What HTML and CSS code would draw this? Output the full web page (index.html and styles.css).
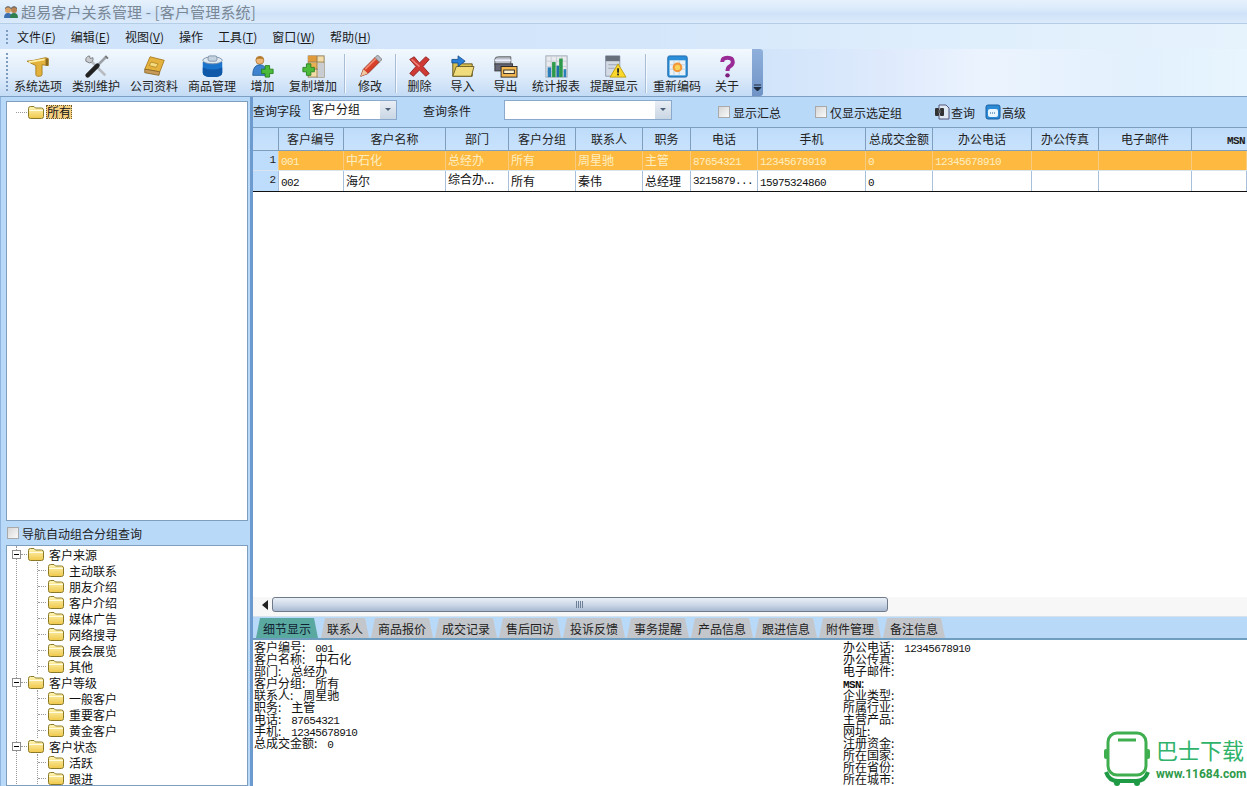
FILE: index.html
```html
<!DOCTYPE html>
<html lang="zh-CN">
<head>
<meta charset="utf-8">
<title>超易客户关系管理</title>
<link rel="stylesheet" href="styles.css">
</head>
<body>
<svg class="defs" width="0" height="0" aria-hidden="true">
  <defs>
    <linearGradient id="fg" x1="0" y1="0" x2="0" y2="1"><stop offset="0" stop-color="#fff6b8"/><stop offset="1" stop-color="#f0c84a"/></linearGradient>
    <symbol id="folder" viewBox="0 0 18 16">
      <path d="M1.5 4.5 Q1.5 2.5 3.5 2.5 H7 L8.5 4 H14.5 Q16.5 4 16.5 6 V12.5 Q16.5 14.5 14.5 14.5 H3.5 Q1.5 14.5 1.5 12.5 Z" fill="url(#fg)" stroke="#8a7a28"/>
      <path d="M2 6.5 H16" stroke="#fffbe0" stroke-width="1"/>
    </symbol>
  </defs>
</svg>
<div class="app">
  <header class="titlebar">
    <svg class="title-icon" width="16" height="14" viewBox="0 0 16 14"><circle cx="5" cy="5" r="3" fill="#d9a066"/><path d="M1 13 Q1 8 5 8 Q9 8 9 13Z" fill="#3c6fb0"/><circle cx="11" cy="5" r="3" fill="#b98250"/><path d="M7 13 Q7 8 11 8 Q15 8 15 13Z" fill="#2f7f4f"/><path d="M2 3.500 Q5 0 8 3.500 M8 3.500 Q11 0 14 3.500" fill="none" stroke="#444"/></svg>
    <span class="title-text">超易客户关系管理 - [客户管理系统]</span>
  </header>

  <nav class="menubar">
    <span class="grip menu-grip"></span>
    <span class="menu-item">文件(<u>F</u>)</span>
    <span class="menu-item">编辑(<u>E</u>)</span>
    <span class="menu-item">视图(<u>V</u>)</span>
    <span class="menu-item">操作</span>
    <span class="menu-item">工具(<u>T</u>)</span>
    <span class="menu-item">窗口(<u>W</u>)</span>
    <span class="menu-item">帮助(<u>H</u>)</span>
  </nav>

  <div class="toolrow">
    <div class="toolbar">
      <span class="grip tool-grip"></span>
      <div class="tool"><svg viewBox="0 0 28 26"><path d="M1 7 L9 6 L22 3 L25 4 V12 L18 11 L18 22 Q18 24 15 24 H13 Q11 24 11 22 V12 Z" fill="#e2b23c" stroke="#a87c1c"/><path d="M3 8 L21 5" stroke="#fff0a8" stroke-width="2"/><path d="M22 4 H25 V12 H22Z" fill="#8a6a20"/></svg><span>系统选项</span></div>
      <div class="tool"><svg viewBox="0 0 28 26"><path d="M5 4 L24 23" stroke="#b8bcc0" stroke-width="3"/><path d="M2 7 Q1 2 6 1 L7 4 L10 3 Q11 8 6 9 Z" fill="#c8ccd0" stroke="#777"/><path d="M25 2 L15 12" stroke="#9aa0a6" stroke-width="3"/><path d="M15 12 L4 23" stroke="#222" stroke-width="5" stroke-linecap="round"/><path d="M24 1 L27 4" stroke="#777" stroke-width="2"/></svg><span>类别维护</span></div>
      <div class="tool"><svg viewBox="0 0 28 26"><path d="M9 2 L25 6 L20 19 L3 16 Z" fill="#e6b23e" stroke="#a87a1e"/><path d="M3 16 L20 19 L19 23 L3 20 Z" fill="#c89a5a" stroke="#8a6a2a"/><path d="M10 8 L18 10 L16 14 L8 12Z" fill="#f6dc80" stroke="#b78a28"/></svg><span>公司资料</span></div>
      <div class="tool"><svg viewBox="0 0 28 26"><path d="M3 8 V20 Q3 25 14 25 Q25 25 25 20 V8 Z" fill="#1a74cc"/><path d="M3 14 Q14 19 25 14 V20 Q25 25 14 25 Q3 25 3 20Z" fill="#0f57a8"/><ellipse cx="14" cy="6" rx="11" ry="4" fill="#dfe9f2" stroke="#7b8ea4"/><rect x="9" y="1" width="10" height="6" rx="2" fill="#c4d2df" stroke="#7b8ea4"/></svg><span>商品管理</span></div>
      <div class="tool small"><svg viewBox="0 0 28 26"><circle cx="11" cy="6" r="4.500" fill="#eeb678" stroke="#b07a3a"/><path d="M6 5 Q11 -1 16 5 Q11 3 6 5Z" fill="#a8701c"/><path d="M3 23 Q3 11 11 11 Q19 11 19 23Z" fill="#3f83d0" stroke="#23609c"/><path d="M17 12 h5 v4 h4 v5 h-4 v4 h-5 v-4 h-4 v-5 h4Z" fill="#4dbb3a" stroke="#25801f"/></svg><span>增加</span></div>
      <div class="tool"><svg viewBox="0 0 28 26"><rect x="8" y="1" width="18" height="24" fill="#f4dca8" stroke="#8a7a5a"/><rect x="8" y="1" width="10" height="7" fill="#e09a3a"/><rect x="8" y="9" width="10" height="7" fill="#e8b052"/><path d="M18 1 V25 M8 8 H26 M8 16 H26" stroke="#8a7a5a"/><rect x="19" y="9" width="7" height="16" fill="#c9ccd0"/><path d="M6 10 h5 v4 h4 v5 h-4 v4 h-5 v-4 h-4 v-5 h4Z" fill="#4dbb3a" stroke="#25801f"/></svg><span>复制增加</span></div>
      <span class="sep"></span>
      <div class="tool mid"><svg viewBox="0 0 28 26"><path d="M3 24 L6 16 L19 3 L24 8 L11 21 Z" fill="#d8402a" stroke="#8e2416"/><path d="M6 16 L11 21 L3 24Z" fill="#f0c8a0"/><path d="M19 3 L22 0 L27 5 L24 8Z" fill="#b8bcc4" stroke="#777"/><path d="M8 16 L20 4" stroke="#f08a70" stroke-width="2"/></svg><span>修改</span></div>
      <span class="sep"></span>
      <div class="tool small"><svg viewBox="0 0 28 26"><path d="M3 5 L8 2 L14 9 L21 2 L25 5 L18 13 L25 21 L21 24 L14 17 L7 24 L3 21 L10 13 Z" fill="#d03a34" stroke="#8a2020"/><path d="M5 5 L14 13" stroke="#ef8a80" stroke-width="1.500"/></svg><span>删除</span></div>
      <div class="tool small"><svg viewBox="0 0 28 26"><path d="M3 8 H12 L14 10 H25 V24 H3Z" fill="#d9c04e" stroke="#5a4e20"/><path d="M3 24 L7 13 H27 L24 24Z" fill="#f0dc7c" stroke="#6a5a20"/><path d="M2 5 H9 V1 L17 7 L9 13 V9 H2Z" fill="#2a7fd8" stroke="#174f90"/></svg><span>导入</span></div>
      <div class="tool small"><svg viewBox="0 0 28 26"><path d="M2 5 Q2 2 6 2 H20 V11 H2Z" fill="#b8bfc8" stroke="#555"/><path d="M2 6 H20" stroke="#eef" stroke-width="2"/><rect x="2" y="10" width="20" height="8" fill="#667" stroke="#333"/><rect x="9" y="13" width="18" height="12" fill="#f3b752" stroke="#222"/><rect x="12" y="17" width="12" height="4" fill="#fff3d0" stroke="#222"/></svg><span>导出</span></div>
      <div class="tool"><svg viewBox="0 0 28 26"><rect x="2" y="1" width="24" height="24" fill="#e8eaee" stroke="#9aa4ae"/><path d="M2 7 H26 M2 13 H26 M2 19 H26 M8 1 V25 M14 1 V25 M20 1 V25" stroke="#c4ccd4"/><rect x="4" y="14" width="4" height="11" fill="#2b7fb8"/><rect x="9" y="8" width="4" height="17" fill="#2c9a4a"/><rect x="14" y="12" width="3" height="13" fill="#1f6fa8"/><rect x="17" y="4" width="4" height="21" fill="#2c9a4a"/><rect x="22" y="16" width="3" height="9" fill="#2b7fb8"/></svg><span>统计报表</span></div>
      <div class="tool"><svg viewBox="0 0 28 26"><path d="M4 1 H20 V24 H4Z" fill="#d4dae4" stroke="#8a96a8"/><path d="M4 1 H20 V7 H4Z" fill="#68707c"/><path d="M7 11 H17 M7 15 H14" stroke="#98a2b2"/><path d="M18 10 L27 25 H9Z" fill="#fcd82c" stroke="#b89a10"/><rect x="17" y="15" width="2" height="5" fill="#222"/><rect x="17" y="21" width="2" height="2" fill="#222"/></svg><span>提醒显示</span></div>
      <span class="sep"></span>
      <div class="tool"><svg viewBox="0 0 28 26"><rect x="3" y="1" width="22" height="24" rx="2" fill="#2a8fd8" stroke="#1a65a8"/><rect x="5" y="6" width="18" height="17" fill="#eaf2f8"/><path d="M5 11 H23 M5 16 H23 M10 6 V23 M16 6 V23" stroke="#bcd0e0"/><circle cx="14" cy="14" r="5.500" fill="#f2983a"/><circle cx="14" cy="14" r="3" fill="#fad25a"/></svg><span>重新编码</span></div>
      <div class="tool last"><svg viewBox="0 0 28 26"><path d="M8 8 Q8 3 14 3 Q20 3 20 8 Q20 11 16.500 13 Q14 14.500 14 18" fill="none" stroke="#9a2a96" stroke-width="4.500"/><circle cx="14" cy="23" r="2.500" fill="#7f1f80"/></svg><span>关于</span></div>
      <div class="tool-more"><svg width="9" height="8" viewBox="0 0 9 8"><path d="M1 1 H8 M1 3.500 H8 L4.500 7Z" fill="#1c2a3c" stroke="#1c2a3c"/></svg></div>
    </div>
  </div>

  <main class="main">
    <aside class="side">
      <div class="treebox tree-top">
        <div class="top-row">
          <span class="hdots"></span>
          <svg class="fld" width="18" height="16"><use href="#folder"/></svg>
          <span class="sel-label">所有</span>
        </div>
      </div>
      <label class="side-check"><span class="check"></span>导航自动组合分组查询</label>
      <div class="treebox tree-bottom">
        <div class="roots">
          <div class="root"><span class="exp"></span><span class="hd"></span><svg class="fld" width="18" height="16"><use href="#folder"/></svg><span class="lbl">客户来源</span></div>
          <div class="kids">
            <div class="kid"><span class="hd2"></span><svg class="fld" width="18" height="16"><use href="#folder"/></svg><span class="lbl">主动联系</span></div>
            <div class="kid"><span class="hd2"></span><svg class="fld" width="18" height="16"><use href="#folder"/></svg><span class="lbl">朋友介绍</span></div>
            <div class="kid"><span class="hd2"></span><svg class="fld" width="18" height="16"><use href="#folder"/></svg><span class="lbl">客户介绍</span></div>
            <div class="kid"><span class="hd2"></span><svg class="fld" width="18" height="16"><use href="#folder"/></svg><span class="lbl">媒体广告</span></div>
            <div class="kid"><span class="hd2"></span><svg class="fld" width="18" height="16"><use href="#folder"/></svg><span class="lbl">网络搜寻</span></div>
            <div class="kid"><span class="hd2"></span><svg class="fld" width="18" height="16"><use href="#folder"/></svg><span class="lbl">展会展览</span></div>
            <div class="kid"><span class="hd2"></span><svg class="fld" width="18" height="16"><use href="#folder"/></svg><span class="lbl">其他</span></div>
          </div>
          <div class="root"><span class="exp"></span><span class="hd"></span><svg class="fld" width="18" height="16"><use href="#folder"/></svg><span class="lbl">客户等级</span></div>
          <div class="kids">
            <div class="kid"><span class="hd2"></span><svg class="fld" width="18" height="16"><use href="#folder"/></svg><span class="lbl">一般客户</span></div>
            <div class="kid"><span class="hd2"></span><svg class="fld" width="18" height="16"><use href="#folder"/></svg><span class="lbl">重要客户</span></div>
            <div class="kid"><span class="hd2"></span><svg class="fld" width="18" height="16"><use href="#folder"/></svg><span class="lbl">黄金客户</span></div>
          </div>
          <div class="root"><span class="exp"></span><span class="hd"></span><svg class="fld" width="18" height="16"><use href="#folder"/></svg><span class="lbl">客户状态</span></div>
          <div class="kids">
            <div class="kid"><span class="hd2"></span><svg class="fld" width="18" height="16"><use href="#folder"/></svg><span class="lbl">活跃</span></div>
            <div class="kid"><span class="hd2"></span><svg class="fld" width="18" height="16"><use href="#folder"/></svg><span class="lbl">跟进</span></div>
          </div>
        </div>
      </div>
    </aside>

    <section class="content">
      <div class="querybar">
        <span class="q-label">查询字段</span>
        <div class="combo combo-field"><span class="combo-text">客户分组</span><span class="combo-btn"></span></div>
        <span class="q-label q-cond">查询条件</span>
        <div class="combo combo-cond"><span class="combo-text"></span><span class="combo-btn"></span></div>
        <label class="q-check q-sum"><span class="check"></span>显示汇总</label>
        <label class="q-check q-only"><span class="check"></span>仅显示选定组</label>
        <span class="q-btn q-search"><svg width="16" height="16" viewBox="0 0 16 16"><path d="M5 1 H12 L15 4 V15 H5Z" fill="#dfeaf4" stroke="#557"/><rect x="1" y="4" width="4" height="8" rx="1" fill="#333"/><rect x="6" y="4" width="4" height="8" rx="1" fill="#333"/><rect x="4" y="6" width="3" height="3" fill="#555"/></svg>查询</span>
        <span class="q-btn q-adv"><svg width="16" height="16" viewBox="0 0 16 16"><rect x="1" y="1" width="14" height="14" rx="2" fill="#2b8ad6" stroke="#1a5fa0"/><rect x="3" y="5" width="10" height="8" rx="2" fill="#eaf6ff"/><path d="M5 9 H11" stroke="#1a5fa0" stroke-dasharray="1 1"/></svg>高级</span>
      </div>

      <div class="grid-wrap">
        <div class="g-row g-head">
          <span class="cell"></span><span class="cell">客户编号</span><span class="cell">客户名称</span><span class="cell">部门</span><span class="cell">客户分组</span><span class="cell">联系人</span><span class="cell">职务</span><span class="cell">电话</span><span class="cell">手机</span><span class="cell">总成交金额</span><span class="cell">办公电话</span><span class="cell">办公传真</span><span class="cell">电子邮件</span><span class="cell"><span class="num msn">MSN</span></span>
        </div>
        <div class="g-row g-sel">
          <span class="cell idx">1</span><span class="cell"><span class="num">001</span></span><span class="cell">中石化</span><span class="cell">总经办</span><span class="cell">所有</span><span class="cell">周星驰</span><span class="cell">主管</span><span class="cell"><span class="num">87654321</span></span><span class="cell"><span class="num">12345678910</span></span><span class="cell"><span class="num">0</span></span><span class="cell"><span class="num">12345678910</span></span><span class="cell"></span><span class="cell"></span><span class="cell"></span>
        </div>
        <div class="g-row g-plain">
          <span class="cell idx">2</span><span class="cell"><span class="num">002</span></span><span class="cell">海尔</span><span class="cell raised">综合办...</span><span class="cell">所有</span><span class="cell">秦伟</span><span class="cell">总经理</span><span class="cell raised"><span class="num">3215879...</span></span><span class="cell"><span class="num">15975324860</span></span><span class="cell"><span class="num">0</span></span><span class="cell"></span><span class="cell"></span><span class="cell"></span><span class="cell"></span>
        </div>
        <div class="grid-fill"></div>
        <div class="hscroll">
          <span class="arrow-left"></span>
          <div class="thumb"><span class="thumb-grip"></span></div>
        </div>
      </div>

      <div class="tabs">
        <span class="tab active">细节显示</span>
        <span class="tab">联系人</span>
        <span class="tab">商品报价</span>
        <span class="tab">成交记录</span>
        <span class="tab">售后回访</span>
        <span class="tab">投诉反馈</span>
        <span class="tab">事务提醒</span>
        <span class="tab">产品信息</span>
        <span class="tab">跟进信息</span>
        <span class="tab">附件管理</span>
        <span class="tab">备注信息</span>
      </div>

      <div class="detail">
        <div class="d-col d-left">
          <div>客户编号:<span class="num val">001</span></div>
          <div>客户名称:<span class="val">中石化</span></div>
          <div>部门:<span class="val">总经办</span></div>
          <div>客户分组:<span class="val">所有</span></div>
          <div>联系人:<span class="val">周星驰</span></div>
          <div>职务:<span class="val">主管</span></div>
          <div>电话:<span class="num val">87654321</span></div>
          <div>手机:<span class="num val">12345678910</span></div>
          <div>总成交金额:<span class="num val">0</span></div>
        </div>
        <div class="d-col">
          <div>办公电话:<span class="num val">12345678910</span></div>
          <div>办公传真:</div>
          <div>电子邮件:</div>
          <div><span class="num msn">MSN</span>:</div>
          <div>企业类型:</div>
          <div>所属行业:</div>
          <div>主营产品:</div>
          <div>网址:</div>
          <div>注册资金:</div>
          <div>所在国家:</div>
          <div>所在省份:</div>
          <div>所在城市:</div>
        </div>
      </div>
    </section>
  </main>

  <div class="watermark">
    <svg class="wm-logo" width="52" height="56" viewBox="0 0 52 56"><rect x="7" y="3" width="38" height="42" rx="9" fill="#fff" stroke="#3fae4f" stroke-width="3"/><path d="M17 10 H35" stroke="#3fae4f" stroke-width="3"/><rect x="3" y="19" width="4" height="10" rx="2" fill="#3fae4f"/><rect x="45" y="19" width="4" height="10" rx="2" fill="#3fae4f"/><path d="M5 42 Q8 51 17 51 H35 Q44 51 47 42" fill="none" stroke="#1f9a45" stroke-width="4"/><circle cx="16" cy="53" r="3" fill="#1f9a45"/><circle cx="36" cy="53" r="3" fill="#1f9a45"/></svg>
    <div class="wm-text">
      <span class="wm-name">巴士下载</span>
      <span class="wm-url">www.11684.com</span>
    </div>
  </div>
</div>
</body>
</html>
```

FILE: styles.css
```css
* { box-sizing: border-box; }
html, body { margin: 0; padding: 0; }
body {
  font-family: "Noto Sans CJK SC", "Liberation Sans", sans-serif;
  font-size: 12px;
  color: #111;
  background: #b9d9f9;
  overflow: hidden;
}
.defs { position: absolute; }
.app {
  position: relative;
  width: 1247px;
  height: 786px;
  display: flex;
  flex-direction: column;
  overflow: hidden;
}
.num {
  font-family: "Liberation Mono", monospace;
  font-size: 11px;
  letter-spacing: -0.6px;
}
.msn { font-weight: 700; }
.val { margin-left: 10px; }

/* title */
.titlebar {
  height: 24px;
  flex: none;
  display: flex;
  align-items: center;
  padding-left: 3px;
  background: linear-gradient(#e6f1fc 0, #dcebfb 35%, #cfe2f8 60%, #dcebfb 100%);
  border-bottom: 1px solid #b4cee8;
}
.title-icon { margin-right: 2px; }
.title-text { font-size: 15px; color: #7a8896; letter-spacing: 0.15px; }

/* menu */
.menubar {
  height: 25px;
  flex: none;
  display: flex;
  align-items: center;
  background: linear-gradient(90deg, #cfe3fa 0, #d3e6fa 50%, #dfeefc 75%, #e6f3fd 100%);
}
.grip {
  width: 2px;
  background: repeating-linear-gradient(#7e9cc0 0 2px, transparent 2px 4px);
}
.menu-grip { height: 14px; margin: 0 1.5px 0 6px; }
.menu-item { padding: 0 7.5px; color: #1a1a1a; }
.menu-item u { text-underline-offset: 1px; }

/* toolbar */
.toolrow {
  height: 47px;
  flex: none;
  background: linear-gradient(90deg, #d0e4fa 760px, #dfeafc 890px, #ebf3fe 980px, #e2f1fd 1150px, #e8f5fe 1247px);
  display: flex;
}
.toolbar {
  width: 763px;
  display: flex;
  align-items: stretch;
  background: linear-gradient(#f2f8fe 0, #dceafa 60%, #c3dbf5 100%);
  border-radius: 0 3px 3px 0;
}
.tool-grip { height: 38px; margin: 4px 0 0 6px; flex: none; }
.tool {
  width: 58px;
  flex: none;
  display: flex;
  flex-direction: column;
  align-items: center;
  padding-top: 6px;
  color: #222;
  line-height: 14px;
}
.tool:nth-child(2) { margin-left: 1px; }
.tool svg { display: block; width: 25px; height: 23px; margin-bottom: 1px; flex: none; }
.tool.small { width: 43px; }
.tool.mid { width: 46px; }
.tool.last { width: 42px; }
.sep {
  width: 1px;
  flex: none;
  margin: 5px 2px 3px 2px;
  background: #a9bdd4;
  box-shadow: 1px 0 0 #f4f9ff;
}
.tool-more {
  width: 11px;
  margin-left: auto;
  flex: none;
  background: linear-gradient(#8fb0dc, #6f93c6);
  display: flex;
  align-items: flex-end;
  justify-content: center;
  padding-bottom: 4px;
  border-radius: 0 3px 3px 0;
}

/* main */
.main {
  flex: 1;
  min-height: 0;
  display: flex;
  border-top: 1px solid #7f9fc2;
  background: #b9d9f9;
}
.side {
  width: 250px;
  flex: none;
  display: flex;
  flex-direction: column;
  padding: 4px 2px 0 5px;
  background: #b9d9f9;
  border-left: 1px solid #8fb4e0;
}
.treebox {
  background: #fff;
  border: 1px solid #7f9dbc;
}
.tree-top { height: 420px; flex: none; padding: 2px 0 0 9px; }
.top-row { display: flex; align-items: center; height: 16px; }
.hdots { width: 11px; border-top: 1px dotted #999; }
.fld { display: block; flex: none; }
.sel-label {
  margin-left: 1px;
  padding: 0 1px;
  line-height: 14px;
  background: #f7d183;
  outline: 1px dotted #6a5a30;
  outline-offset: -1px;
}
.side-check {
  height: 24px;
  flex: none;
  display: flex;
  align-items: center;
  padding-left: 1px;
  color: #222;
}
.check {
  width: 12px;
  height: 12px;
  flex: none;
  margin-right: 3px;
  background: linear-gradient(135deg, #d6d6d6, #fafafa);
  border: 1px solid #a9a9a9;
}
.tree-bottom { flex: 1; min-height: 0; overflow: hidden; }
.roots { margin-left: 9px; border-left: 1px dotted #999; }
.root, .kid { height: 16px; display: flex; align-items: center; }
.exp {
  position: relative;
  width: 9px;
  height: 9px;
  flex: none;
  margin-left: -5px;
  background: #fff;
  border: 1px solid #8d8d8d;
}
.exp::after {
  content: "";
  position: absolute;
  left: 1px;
  right: 1px;
  top: 3px;
  height: 1px;
  background: #000;
}
.hd { width: 6px; flex: none; border-top: 1px dotted #999; }
.root .lbl { margin-left: 4px; }
.kids { margin-left: 20px; border-left: 1px dotted #999; }
.hd2 { width: 8px; flex: none; border-top: 1px dotted #999; }
.kid .fld { margin-left: 1px; }
.kid .lbl { margin-left: 4px; }
.lbl { color: #111; }

/* content */
.content {
  flex: 1;
  min-width: 0;
  display: flex;
  flex-direction: column;
  border-left: 3px solid #6d9bd0;
}
.querybar {
  height: 30px;
  flex: none;
  display: flex;
  align-items: center;
  padding-bottom: 4px;
  background: #b9d9f9;
  color: #222;
}
.q-label { white-space: nowrap; }
.combo {
  height: 20px;
  display: flex;
  background: #fff;
  border: 1px solid #8aa9cc;
}
.combo-text { flex: 1; padding-left: 2px; line-height: 16px; color: #111; }
.combo-btn {
  position: relative;
  width: 16px;
  background: linear-gradient(#e9eef4, #c9d6e4);
}
.combo-btn::after {
  content: "";
  position: absolute;
  left: 5px;
  top: 7px;
  border: 3px solid transparent;
  border-top: 3px solid #4d6078;
}
.combo-field { width: 88px; margin-left: 8px; }
.q-cond { margin-left: 26px; }
.combo-cond { width: 168px; margin-left: 33px; }
.q-check { display: flex; align-items: center; white-space: nowrap; position: relative; top: 2px; }
.q-sum { margin-left: 46px; }
.q-only { margin-left: 34px; }
.q-btn { display: flex; align-items: center; gap: 1px; white-space: nowrap; position: relative; top: 2px; }
.q-search { margin-left: 32px; }
.q-adv { margin-left: 10px; }

/* grid */
.grid-wrap {
  flex: 1;
  min-height: 0;
  display: flex;
  flex-direction: column;
  background: #fff;
  border-top: 1px solid #7f9dbc;
}
.g-row {
  display: grid;
  grid-template-columns: 26px 65px 102px 63px 67px 67px 48px 67px 108px 67px 99px 67px 93px 55px;
  flex: none;
}
.cell {
  display: block;
  padding: 0 2px;
  border-right: 1px solid #a8c0da;
  white-space: nowrap;
  overflow: hidden;
}
.g-head {
  height: 23px;
  line-height: 21px;
  background: linear-gradient(#bedcfb, #c8e2fc);
  border-bottom: 1px solid #7f9dbc;
  color: #222;
}
.g-head .cell { text-align: center; border-right-color: #7f9dbc; }
.g-head .cell:last-child { text-align: right; border-right: 0; }
.g-sel {
  height: 20px;
  line-height: 18px;
  background: #fdb940;
  color: #fdeec0;
  border-bottom: 1px solid #d8e4ee;
}
.g-sel .cell { border-right-color: #f7cc80; }
.g-plain {
  height: 20px;
  line-height: 19px;
  background: #fff;
  color: #111;
}
.idx {
  background: #bedcfb;
  color: #222;
  text-align: right;
  font-family: "Liberation Mono", monospace;
  font-size: 11px;
}
.raised { line-height: 15px; }
.grid-fill {
  flex: 1;
  min-height: 0;
  border-top: 1px solid #111;
  background: #fff;
}
.hscroll {
  height: 20px;
  flex: none;
  display: flex;
  align-items: flex-start;
  padding-left: 6px;
  background: #f7f7f7;
  border-bottom: 1px solid #d5e2ee;
}
.arrow-left {
  width: 0;
  height: 0;
  margin: 3px 4px 0 3px;
  border: 5px solid transparent;
  border-right: 6px solid #222;
  border-left: 0;
}
.thumb {
  width: 616px;
  height: 15px;
  border: 1px solid #6f7a88;
  border-radius: 3px;
  background: linear-gradient(#e9eff6 0, #cdd9e8 50%, #a9b9d2 100%);
  display: flex;
  align-items: center;
  justify-content: center;
}
.thumb-grip {
  width: 8px;
  height: 7px;
  background: repeating-linear-gradient(90deg, #6f7f96 0 1px, transparent 1px 2px);
}

/* tabs */
.tabs {
  height: 23px;
  flex: none;
  display: flex;
  align-items: flex-end;
  gap: 2px;
  padding-left: 3px;
  background: #b9d9f9;
  border-bottom: 2px solid #6f9dbf;
}
.tab {
  width: 62px;
  height: 20px;
  line-height: 21px;
  text-align: center;
  background: #c3c6ca;
  color: #222;
  clip-path: polygon(4px 0, calc(100% - 4px) 0, 100% 100%, 0 100%);
}
.tab:nth-child(2) { width: 48px; margin-left: 1px; }
.tab.active { background: #5aa9a0; color: #123; }

/* detail */
.detail {
  height: 146px;
  flex: none;
  display: flex;
  background: #fff;
  padding: 1px 0 0 1px;
  line-height: 12px;
  color: #111;
}
.d-left { width: 589px; flex: none; }
.d-col div { height: 12px; white-space: nowrap; }

/* watermark */
.watermark {
  position: absolute;
  right: 0;
  bottom: 0;
  width: 151px;
  height: 56px;
  display: flex;
  gap: 3px;
  background: #fff;
}
.wm-logo { display: block; flex: none; margin-left: 5px; }
.wm-text { display: flex; flex-direction: column; padding-top: 7px; }
.wm-name { font-size: 22px; line-height: 24px; color: #2fb36b; white-space: nowrap; }
.wm-url {
  font-family: "Roboto", sans-serif;
  font-weight: 700;
  font-size: 12px;
  line-height: 16px;
  margin-top: 5px;
  color: #2f9a4a;
  white-space: nowrap;
}
```
